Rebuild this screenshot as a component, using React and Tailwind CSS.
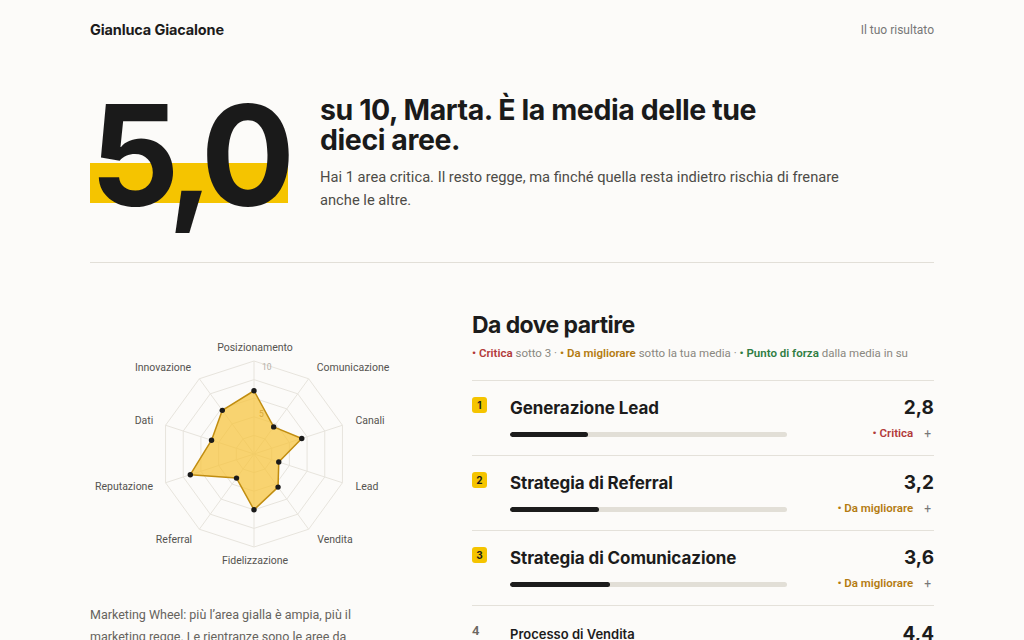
import React from "react";

const AXES = [
  { name: "Posizionamento", v: 6.8, lx: 165, ly: 40, a: "middle" },
  { name: "Comunicazione", v: 3.6, lx: 263, ly: 60, a: "middle" },
  { name: "Canali", v: 5.4, lx: 280, ly: 113, a: "middle" },
  { name: "Lead", v: 2.8, lx: 277, ly: 179, a: "middle" },
  { name: "Vendita", v: 4.4, lx: 245, ly: 232, a: "middle" },
  { name: "Fidelizzazione", v: 6.0, lx: 165, ly: 253, a: "middle" },
  { name: "Referral", v: 3.2, lx: 84, ly: 232, a: "middle" },
  { name: "Reputazione", v: 7.2, lx: 34, ly: 179, a: "middle" },
  { name: "Dati", v: 4.8, lx: 54, ly: 113, a: "middle" },
  { name: "Innovazione", v: 5.8, lx: 73, ly: 60, a: "middle" },
];

const CX = 164;
const CY = 143;
const R = 93;

function pt(i, val) {
  const t = (i * 36 * Math.PI) / 180;
  const r = (val / 10) * R;
  return [CX + r * Math.sin(t), CY - r * Math.cos(t)];
}

function Radar() {
  const rings = [2, 4, 6, 8, 10];
  const data = AXES.map((a, i) => pt(i, a.v));
  return (
    <svg width="330" height="292" viewBox="0 0 330 292" className="block">
      {rings.map((lv) => (
        <polygon
          key={lv}
          points={AXES.map((_, i) => pt(i, lv).join(",")).join(" ")}
          fill="none"
          stroke="#e7e4dd"
          strokeWidth="1"
        />
      ))}
      {AXES.map((_, i) => {
        const [x, y] = pt(i, 10);
        return <line key={i} x1={CX} y1={CY} x2={x} y2={y} stroke="#e7e4dd" strokeWidth="1" />;
      })}
      <text x="172" y="59" fontSize="8.5" fill="#b3afa6" style={{ fontFamily: "Roboto, sans-serif" }}>10</text>
      <polygon
        points={data.map((p) => p.join(",")).join(" ")}
        fill="#f7c43a"
        fillOpacity="0.72"
        stroke="#c18d10"
        strokeWidth="1.5"
        strokeLinejoin="round"
      />
      <text x="169" y="106" fontSize="8.5" fill="#d9a93a" style={{ fontFamily: "Roboto, sans-serif" }}>5</text>
      {data.map(([x, y], i) => (
        <circle key={i} cx={x} cy={y} r="2.7" fill="#1a1a1a" />
      ))}
      {AXES.map((a) => (
        <text
          key={a.name}
          x={a.lx}
          y={a.ly}
          textAnchor={a.a}
          fontSize="10.5"
          fill="#555350"
          style={{ fontFamily: "Roboto, sans-serif" }}
        >
          {a.name}
        </text>
      ))}
    </svg>
  );
}

function Row({ n, title, score, pct, status, tone, small }) {
  const toneClass =
    tone === "red" ? "text-[#b23a3a]" : tone === "amber" ? "text-[#b47b12]" : "text-[#2f7d43]";
  if (small) {
    return (
      <div className="flex border-t border-[#e4e1da] pt-[16px] pb-[14px]">
        <div className="w-[38px] shrink-0 text-[13px] font-semibold leading-[18px] text-[#6b6862]">{n}</div>
        <div className="flex flex-1 items-center justify-between">
          <div className="text-[13px] font-semibold leading-[18px] text-[#1c1c1c] font-['Inter',sans-serif]">{title}</div>
          <div className="text-[19px] font-bold leading-[24px] text-[#1c1c1c] font-['Inter',sans-serif]">{score}</div>
        </div>
      </div>
    );
  }
  return (
    <div className="flex border-t border-[#e4e1da] pt-[16px] pb-[13px]">
      <div className="w-[38px] shrink-0">
        <div className="flex h-[16px] w-[15px] items-center justify-center rounded-[3px] bg-[#f5c400] text-[10px] font-bold text-[#1c1c1c] font-['Inter',sans-serif]">
          {n}
        </div>
      </div>
      <div className="flex flex-1 flex-col">
        <div className="flex items-center justify-between">
          <div className="text-[17px] font-bold leading-[22px] tracking-[-0.005em] text-[#1c1c1c] font-['Inter',sans-serif]">{title}</div>
          <div className="text-[19px] font-bold leading-[22px] text-[#1c1c1c] font-['Inter',sans-serif]">{score}</div>
        </div>
        <div className="mt-[7px] flex h-[16px] items-center justify-between">
          <div className="h-[5px] w-[277px] overflow-hidden rounded-full bg-[#e2dfd7]">
            <div className="h-full rounded-full bg-[#1c1c1c]" style={{ width: `${pct}%` }} />
          </div>
          <div className="flex items-center">
            <span className={`text-[11.5px] font-semibold ${toneClass}`}>• {status}</span>
            <span className="ml-[11px] mr-[3px] text-[12px] text-[#777]">+</span>
          </div>
        </div>
      </div>
    </div>
  );
}

export default function App() {
  return (
    <div className="min-h-[640px] w-full overflow-hidden bg-[#fcfbf9] text-[#1c1c1c] font-['Roboto',sans-serif]">
      <div className="mx-auto w-[844px]">
        <header className="flex items-center justify-between pt-[20px]">
          <div className="text-[14.5px] font-bold leading-[20px] tracking-[-0.01em] font-['Inter',sans-serif]">Gianluca Giacalone</div>
          <div className="text-[12px] leading-[20px] text-[#777]">Il tuo risultato</div>
        </header>

        <section className="mt-[40px] flex border-b border-[#e2dfd8] pb-[35px]">
          <div className="relative h-[147px] w-[230px] shrink-0">
            <div className="absolute left-0 top-[83px] h-[40px] w-[198px] bg-[#f5c400]" />
            <div className="relative pt-[5px] text-[140px] font-bold leading-[1] tracking-[-0.065em] text-[#1a1a1a] font-['Inter',sans-serif]">
              5,0
            </div>
          </div>
          <div className="pt-[15px]">
            <h1 className="max-w-[470px] text-[28.5px] font-bold leading-[30px] tracking-[-0.015em] text-[#1a1a1a] font-['Inter',sans-serif]">
              su 10, Marta. È la media delle tue dieci aree.
            </h1>
            <p className="mt-[11px] max-w-[540px] text-[14.7px] leading-[23px] text-[#4d4b47]">
              Hai 1 area critica. Il resto regge, ma finché quella resta indietro rischia di frenare anche le altre.
            </p>
          </div>
        </section>

        <section className="flex pt-[48px]">
          <div className="w-[382px] shrink-0">
            <Radar />
            <p className="mt-[1px] max-w-[272px] text-[12.5px] leading-[22px] text-[#66635d]">
              Marketing Wheel: più l’area gialla è ampia, più il marketing regge. Le rientranze sono le aree da migliorare.
            </p>
          </div>
          <div className="flex-1">
            <h2 className="text-[23px] font-bold leading-[28px] tracking-[-0.025em] font-['Inter',sans-serif]">Da dove partire</h2>
            <div className="mt-[5px] text-[11.5px] leading-[18px] text-[#8a8780]">
              <span className="font-semibold text-[#b23a3a]">• Critica</span> sotto 3 ·{" "}
              <span className="font-semibold text-[#b47b12]">• Da migliorare</span> sotto la tua media ·{" "}
              <span className="font-semibold text-[#2f7d43]">• Punto di forza</span> dalla media in su
            </div>
            <div className="mt-[18px]">
              <Row n="1" title="Generazione Lead" score="2,8" pct={28} status="Critica" tone="red" />
              <Row n="2" title="Strategia di Referral" score="3,2" pct={32} status="Da migliorare" tone="amber" />
              <Row n="3" title="Strategia di Comunicazione" score="3,6" pct={36} status="Da migliorare" tone="amber" />
              <Row n="4" title="Processo di Vendita" score="4,4" small />
            </div>
          </div>
        </section>
      </div>
    </div>
  );
}
